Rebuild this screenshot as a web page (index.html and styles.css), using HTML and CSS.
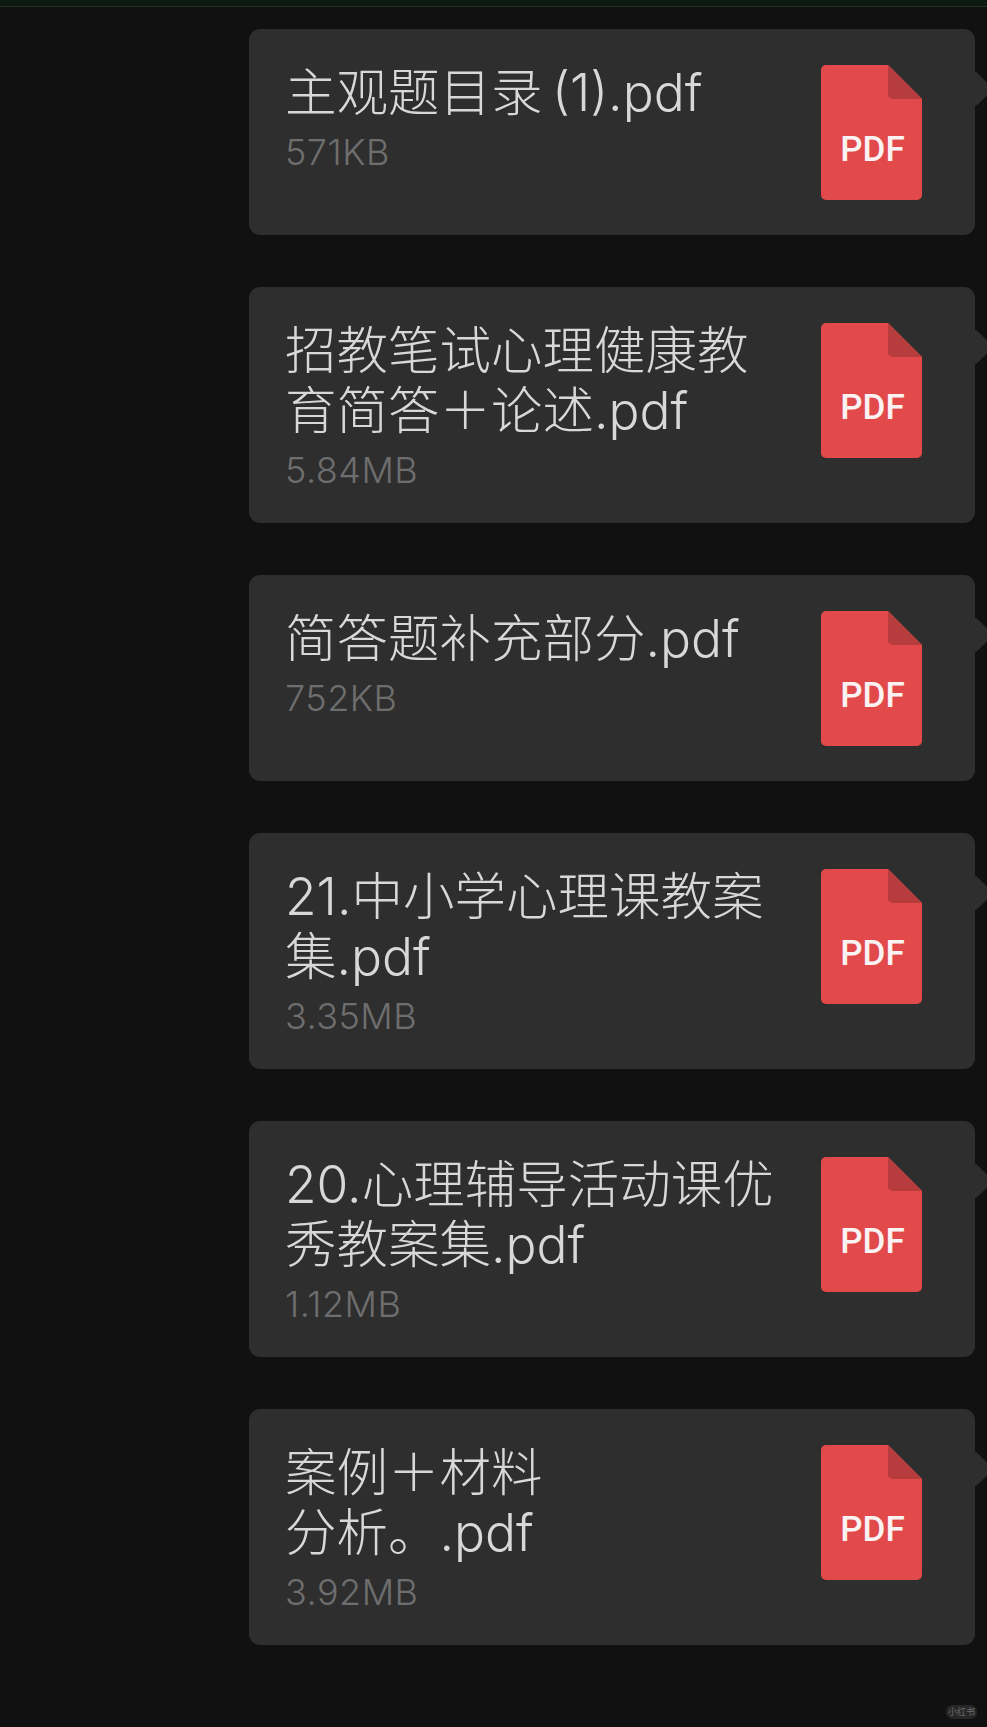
FILE: index.html
```html
<!DOCTYPE html>
<html lang="en">

<head>
    <meta charset="UTF-8">
    <meta name="viewport" content="width=device-width, initial-scale=1.0">
    <title>Files</title>
    <link rel="stylesheet" href="styles.css">
</head>

<body>
    <div class="topBar"></div>

    <div class="fileList">
        <div class="card">
            <div class="info">
                <div class="name">主观题目录 (1).pdf</div>
                <div class="size">571KB</div>
            </div>
            <svg class="pdfIcon" viewBox="0 0 101 135"><path class="sheet" d="M5 0H67L101 34V130a5 5 0 0 1-5 5H5a5 5 0 0 1-5-5V5a5 5 0 0 1 5-5Z"/><path class="fold" d="M67 0L101 34H72a5 5 0 0 1-5-5Z"/><text class="pdfText" x="51.5" y="96" text-anchor="middle">PDF</text></svg>
        </div>

        <div class="card">
            <div class="info">
                <div class="name">招教笔试心理健康教<br>育简答＋论述.pdf</div>
                <div class="size">5.84MB</div>
            </div>
            <svg class="pdfIcon" viewBox="0 0 101 135"><path class="sheet" d="M5 0H67L101 34V130a5 5 0 0 1-5 5H5a5 5 0 0 1-5-5V5a5 5 0 0 1 5-5Z"/><path class="fold" d="M67 0L101 34H72a5 5 0 0 1-5-5Z"/><text class="pdfText" x="51.5" y="96" text-anchor="middle">PDF</text></svg>
        </div>

        <div class="card">
            <div class="info">
                <div class="name">简答题补充部分.pdf</div>
                <div class="size">752KB</div>
            </div>
            <svg class="pdfIcon" viewBox="0 0 101 135"><path class="sheet" d="M5 0H67L101 34V130a5 5 0 0 1-5 5H5a5 5 0 0 1-5-5V5a5 5 0 0 1 5-5Z"/><path class="fold" d="M67 0L101 34H72a5 5 0 0 1-5-5Z"/><text class="pdfText" x="51.5" y="96" text-anchor="middle">PDF</text></svg>
        </div>

        <div class="card">
            <div class="info">
                <div class="name">21.中小学心理课教案<br>集.pdf</div>
                <div class="size">3.35MB</div>
            </div>
            <svg class="pdfIcon" viewBox="0 0 101 135"><path class="sheet" d="M5 0H67L101 34V130a5 5 0 0 1-5 5H5a5 5 0 0 1-5-5V5a5 5 0 0 1 5-5Z"/><path class="fold" d="M67 0L101 34H72a5 5 0 0 1-5-5Z"/><text class="pdfText" x="51.5" y="96" text-anchor="middle">PDF</text></svg>
        </div>

        <div class="card">
            <div class="info">
                <div class="name">20.心理辅导活动课优<br>秀教案集.pdf</div>
                <div class="size">1.12MB</div>
            </div>
            <svg class="pdfIcon" viewBox="0 0 101 135"><path class="sheet" d="M5 0H67L101 34V130a5 5 0 0 1-5 5H5a5 5 0 0 1-5-5V5a5 5 0 0 1 5-5Z"/><path class="fold" d="M67 0L101 34H72a5 5 0 0 1-5-5Z"/><text class="pdfText" x="51.5" y="96" text-anchor="middle">PDF</text></svg>
        </div>

        <div class="card">
            <div class="info">
                <div class="name">案例＋材料<br>分析。.pdf</div>
                <div class="size">3.92MB</div>
            </div>
            <svg class="pdfIcon" viewBox="0 0 101 135"><path class="sheet" d="M5 0H67L101 34V130a5 5 0 0 1-5 5H5a5 5 0 0 1-5-5V5a5 5 0 0 1 5-5Z"/><path class="fold" d="M67 0L101 34H72a5 5 0 0 1-5-5Z"/><text class="pdfText" x="51.5" y="96" text-anchor="middle">PDF</text></svg>
        </div>
    </div>

    <div class="watermark">小红书</div>
</body>

</html>
```
FILE: styles.css
```css
*{
    margin: 0;
    padding: 0;
    box-sizing: border-box;
}

html, body{
    height: 100%;
    overflow: hidden;
}

body{
    position: relative;
    background-color: #111111;
    font-family: "Inter", "Noto Sans CJK SC", sans-serif;
}

.topBar{
    height: 7px;
    background-color: #0c1a12;
    border-bottom: 1px solid #26302a;
}

.fileList{
    display: flex;
    flex-direction: column;
    gap: 52px;
    margin-left: 249px;
    padding-top: 22px;
    width: 726px;
}

.card{
    position: relative;
    display: flex;
    justify-content: space-between;
    align-items: flex-start;
    padding: 33px 53px 31px 36px;
    border-radius: 11px;
    background-color: #2e2e2e;
}

/* little tail on the bubble, cut off by the window edge */
.card::after{
    content: "";
    position: absolute;
    top: 47px;
    right: -13px;
    width: 26px;
    height: 26px;
    border-radius: 4px;
    background-color: #2e2e2e;
    transform: rotate(45deg);
}

.name{
    font-size: 51.5px;
    font-weight: 300;
    line-height: 60px;
    word-spacing: -5px;
    color: #d8d8d8;
}

.size{
    margin-top: 8px;
    font-size: 36px;
    font-weight: 300;
    line-height: 44px;
    letter-spacing: 0.5px;
    color: #6e6e6e;
}

.pdfIcon{
    flex-shrink: 0;
    width: 101px;
    height: 135px;
    margin: 3px 0 4px;
}

.sheet{
    fill: #e2494b;
}

.fold{
    fill: #b63c3e;
}

.pdfText{
    font-family: "Roboto", sans-serif;
    font-size: 35px;
    font-weight: 500;
    fill: #fbf3f3;
}

.watermark{
    position: absolute;
    right: 10px;
    bottom: 8px;
    padding: 1px 2px;
    border-radius: 7px;
    background-color: #272727;
    font-size: 9px;
    line-height: 12px;
    color: #6a6a6a;
}
```
